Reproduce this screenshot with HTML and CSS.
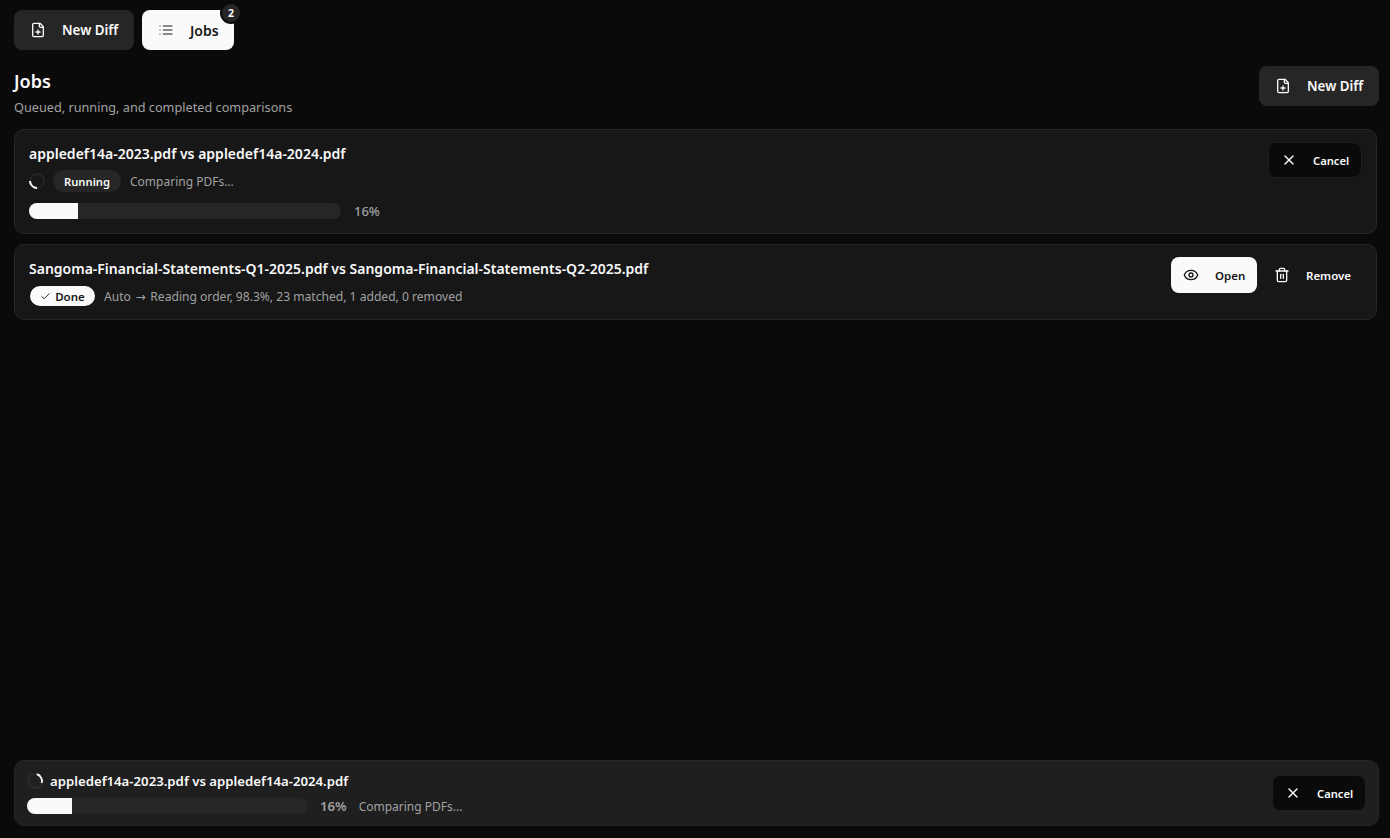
FILE: index.html
```html
<!DOCTYPE html>
<html lang="en">
<head>
<meta charset="utf-8">
<title>Jobs</title>
<link rel="stylesheet" href="styles.css">
</head>
<body>
<div class="app">
  <nav class="nav">
    <button class="btn btn-grey btn-lg">
      <svg class="ico" viewBox="0 0 24 24"><path d="M15 2H6a2 2 0 0 0-2 2v16a2 2 0 0 0 2 2h12a2 2 0 0 0 2-2V7Z"/><path d="M14 2v4a2 2 0 0 0 2 2h4"/><path d="M9 15h6"/><path d="M12 18v-6"/></svg>
      <span>New Diff</span>
    </button>
    <button class="btn btn-white btn-lg btn-jobs">
      <svg class="ico ico-thin" viewBox="0 0 24 24"><path d="M3 6h.01"/><path d="M8 6h13"/><path d="M3 12h.01"/><path d="M8 12h13"/><path d="M3 18h.01"/><path d="M8 18h13"/></svg>
      <span class="jobs-label">Jobs</span>
      <span class="badge">2</span>
    </button>
  </nav>

  <header class="head">
    <div>
      <h1 class="title">Jobs</h1>
      <p class="sub">Queued, running, and completed comparisons</p>
    </div>
    <button class="btn btn-grey btn-lg">
      <svg class="ico" viewBox="0 0 24 24"><path d="M15 2H6a2 2 0 0 0-2 2v16a2 2 0 0 0 2 2h12a2 2 0 0 0 2-2V7Z"/><path d="M14 2v4a2 2 0 0 0 2 2h4"/><path d="M9 15h6"/><path d="M12 18v-6"/></svg>
      <span>New Diff</span>
    </button>
  </header>

  <section class="card card-running">
    <div class="card-main">
      <div class="job-name">appledef14a-2023.pdf vs appledef14a-2024.pdf</div>
      <div class="meta">
        <span class="spinner"></span>
        <span class="chip chip-dark">Running</span>
        <span class="muted">Comparing PDFs...</span>
      </div>
      <div class="progress-row">
        <div class="track"><div class="fill" style="width:15.8%"></div></div>
        <span class="pct">16%</span>
      </div>
    </div>
    <button class="btn btn-black btn-sm">
      <svg class="ico" viewBox="0 0 24 24"><path d="M18 6 6 18"/><path d="m6 6 12 12"/></svg>
      <span>Cancel</span>
    </button>
  </section>

  <section class="card card-done">
    <div class="card-main">
      <div class="job-name">Sangoma-Financial-Statements-Q1-2025.pdf vs Sangoma-Financial-Statements-Q2-2025.pdf</div>
      <div class="meta meta-done">
        <span class="chip chip-white">
          <svg class="ico-check" viewBox="0 0 24 24"><path d="M20 6 9 17l-5-5"/></svg>
          Done
        </span>
        <span class="muted">Auto <span class="arrow">→</span> Reading order, 98.3%, 23 matched, 1 added, 0 removed</span>
      </div>
    </div>
    <div class="actions">
      <button class="btn btn-white btn-open">
        <svg class="ico" viewBox="0 0 24 24"><path d="M2.06 12.35a1 1 0 0 1 0-.7 10.75 10.75 0 0 1 19.88 0 1 1 0 0 1 0 .7 10.75 10.75 0 0 1-19.88 0"/><circle cx="12" cy="12" r="3"/></svg>
        <span>Open</span>
      </button>
      <button class="btn btn-ghost btn-remove">
        <svg class="ico" viewBox="0 0 24 24"><path d="M10 11v6"/><path d="M14 11v6"/><path d="M19 6v14a2 2 0 0 1-2 2H7a2 2 0 0 1-2-2V6"/><path d="M3 6h18"/><path d="M8 6V4a2 2 0 0 1 2-2h4a2 2 0 0 1 2 2v2"/></svg>
        <span>Remove</span>
      </button>
    </div>
  </section>

  <footer class="dock">
    <div class="dock-main">
      <div class="dock-title">
        <span class="spinner spinner-dock"></span>
        <span class="job-name job-name-dock">appledef14a-2023.pdf vs appledef14a-2024.pdf</span>
      </div>
      <div class="dock-progress">
        <div class="track track-dock"><div class="fill" style="width:16%"></div></div>
        <span class="pct pct-dock">16%</span>
        <span class="muted muted-dock">Comparing PDFs...</span>
      </div>
    </div>
    <button class="btn btn-black btn-sm">
      <svg class="ico" viewBox="0 0 24 24"><path d="M18 6 6 18"/><path d="m6 6 12 12"/></svg>
      <span>Cancel</span>
    </button>
  </footer>
</div>
</body>
</html>
```

FILE: styles.css
```css
* { box-sizing: border-box; }
html, body { margin: 0; height: 100%; overflow: hidden; }
body {
  background: #0a0a0a;
  color: #fafafa;
  font-family: "Noto Sans", "Open Sans", sans-serif;
}
.app {
  height: 838px;
  padding: 10px 11px 12px 14px;
  display: flex;
  flex-direction: column;
}
.nav { display: flex; gap: 8px; }
.btn {
  display: inline-flex;
  align-items: center;
  border: 0;
  font-family: inherit;
  font-weight: 600;
  color: #fafafa;
  padding: 0;
  flex-shrink: 0;
}
.btn-lg {
  height: 40px;
  width: 120px;
  border-radius: 8px;
  padding-left: 16px;
  gap: 16px;
  font-size: 13.4px;
}
.btn-grey { background: #262626; }
.btn-white { background: #fafafa; color: #171717; }
.btn-black {
  background: #0a0a0a;
  border: 1px solid #1f1f1f;
  border-radius: 8px;
}
.btn-sm {
  width: 94px;
  height: 36px;
  padding-left: 12px;
  gap: 16px;
  font-size: 11.2px;
}
.btn-jobs { width: 92px; position: relative; }
.jobs-label { font-size: 14px; }
.ico {
  width: 16px;
  height: 16px;
  flex-shrink: 0;
  fill: none;
  stroke: currentColor;
  stroke-width: 2;
  stroke-linecap: round;
  stroke-linejoin: round;
}
.ico-thin { stroke-width: 1.8; }
.badge {
  position: absolute;
  top: -8px;
  right: -8px;
  width: 22px;
  height: 22px;
  border-radius: 50%;
  background: #262626;
  border: 2px solid #0a0a0a;
  color: #fafafa;
  font-size: 10.5px;
  font-weight: 700;
  display: flex;
  align-items: center;
  justify-content: center;
}
.head {
  margin-top: 16px;
  display: flex;
  justify-content: space-between;
  align-items: flex-start;
  height: 63px;
}
.title {
  margin: 1px 0 0;
  font-size: 18px;
  line-height: 28px;
  font-weight: 600;
}
.sub {
  margin: 2px 0 0;
  font-size: 12.7px;
  line-height: 20px;
  color: #a1a1a1;
}
.card {
  width: 1363px;
  background: #171717;
  border: 1px solid #262626;
  border-radius: 10px;
  display: flex;
  justify-content: space-between;
  align-items: flex-start;
}
.card-running { height: 105px; padding: 12px 14px 0 14px; }
.card-done { height: 76px; margin-top: 10px; padding: 12px 13px 0 14px; }
.job-name {
  font-size: 14px;
  line-height: 24px;
  font-weight: 600;
  color: #fafafa;
}
.meta {
  display: flex;
  align-items: center;
  gap: 8px;
  height: 22px;
  margin-top: 4px;
}
.meta-done { height: 20px; margin-top: 5px; gap: 9px; margin-left: 1px; }
.meta .muted { margin-left: 1px; }
.meta-done .muted { margin-left: 0; font-size: 12.1px; }
.muted { font-size: 12px; color: #a1a1a1; }
.arrow { font-family: "DejaVu Sans", sans-serif; margin: 0 1.5px; }
.chip {
  display: inline-flex;
  align-items: center;
  justify-content: center;
  border-radius: 999px;
  font-size: 11.2px;
  font-weight: 600;
}
.chip-dark { background: #262626; width: 68px; height: 22px; color: #fafafa; }
.chip-white { background: #fafafa; color: #171717; width: 65px; height: 20px; gap: 4px; font-size: 11.5px; }
.ico-check {
  width: 11px;
  height: 11px;
  fill: none;
  stroke: currentColor;
  stroke-width: 2;
  stroke-linecap: round;
  stroke-linejoin: round;
}
.spinner {
  width: 16px;
  height: 16px;
  border-radius: 50%;
  border: 2px solid #262626;
  border-left-color: #fafafa;
  transform: rotate(-45deg);
}
.spinner-dock {
  display: block;
  flex-shrink: 0;
  border-color: #2b2b2b;
  border-right-color: #fafafa;
  transform: rotate(-30deg);
}
.progress-row {
  display: flex;
  align-items: center;
  gap: 13px;
  margin-top: 10px;
}
.track {
  width: 312px;
  height: 16px;
  background: #262626;
  border-radius: 999px;
  overflow: hidden;
}
.fill { height: 100%; background: #fafafa; }
.pct { font-size: 13px; color: #a1a1a1; font-weight: 500; }
.actions { display: flex; gap: 8px; }
.btn-open {
  width: 86px;
  height: 36px;
  border-radius: 8px;
  padding-left: 12px;
  gap: 16px;
  font-size: 11.5px;
}
.btn-ghost { background: transparent; }
.btn-remove {
  width: 98px;
  height: 36px;
  padding-left: 9px;
  gap: 16px;
  font-size: 11.5px;
}
.dock {
  margin-top: auto;
  width: 1365px;
  height: 66px;
  background: #1f1f1f;
  border: 1px solid #262626;
  border-radius: 10px;
  padding: 0 12px;
  display: flex;
  justify-content: space-between;
  align-items: center;
}
.dock-title { display: flex; align-items: center; gap: 7px; height: 20px; }
.job-name-dock { font-size: 13.2px; line-height: 20px; }
.dock-progress { display: flex; align-items: center; margin-top: 6px; }
.track-dock { width: 281px; }
.pct-dock { font-size: 13.2px; font-weight: 600; margin: 0 12px; }
.muted-dock { margin: 1px 0 0; }
```
